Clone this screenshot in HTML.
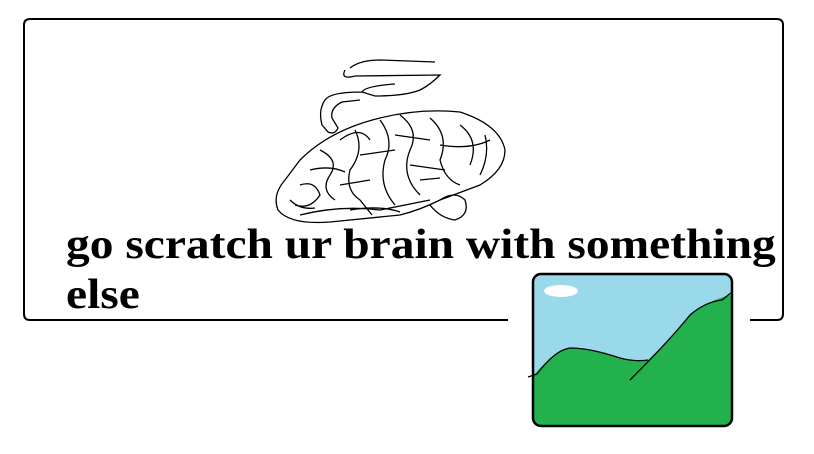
<!DOCTYPE html>
<html><head><style>
body{margin:0;width:814px;height:454px;background:#fff;position:relative;overflow:hidden}
.t{position:absolute;left:66px;top:220px;font:bold 42px/50px "Liberation Serif",serif;color:#000;white-space:nowrap;transform:scaleX(1.13);transform-origin:0 0}
</style></head><body>
<svg width="814" height="454" style="position:absolute;left:0;top:0" fill="none" stroke="#000">
<path d="M508 320 H30 Q24 320 24 314 V25 Q24 19 30 19 H777 Q783 19 783 25 V314 Q783 320 777 320 H750" stroke-width="2"/>
<g stroke-width="1.3">
<path d="M350 68 Q360 60 380 60 L435 62 M345 70 Q340 80 355 76 L440 75 Q430 85 420 90 Q405 96 375 96 L362 92 Q365 86 395 84 M362 92 Q330 92 325 100 Q318 110 322 125 L328 132 Q335 135 338 128 L332 118 Q330 108 342 102 L360 100"/>
<path d="M300 160 Q330 130 380 118 Q420 108 460 112 Q500 125 505 150 Q505 170 480 185 L440 200 Q420 210 400 215 L330 222 Q290 225 278 210 Q272 195 285 180 Z"/>
<path d="M440 200 Q455 190 465 200 Q470 215 455 220 Q440 218 430 205"/>
<path d="M320 150 Q340 160 330 175 Q320 190 335 200 M355 130 Q365 150 350 170 Q345 190 360 200 L372 215 M380 120 Q395 140 385 160 Q378 185 395 205 M400 115 Q420 130 410 150 Q400 175 420 195 M430 118 Q450 135 440 160 Q445 180 460 185 M460 125 Q480 140 470 165 M485 135 Q490 155 480 175 M300 185 Q315 180 320 195 Q310 210 295 205 M340 185 L370 180 M395 135 L430 140 M410 165 L445 170 M350 210 Q380 205 400 212 M290 200 Q300 210 315 208 M370 140 Q360 125 340 140 M420 180 L440 178 M310 170 Q330 165 345 172 M440 145 Q470 150 490 140 M300 215 Q340 205 380 210 L430 200 M360 155 L395 150"/>
</g>
<rect x="533" y="274" width="199" height="152" rx="8" fill="#99d9ea" stroke="none"/>
<path d="M533 376 Q555 350 570 348 Q590 348 620 358 Q635 362 648 360 Q670 340 690 315 Q705 302 730 295 L732 298 V418 Q732 426 724 426 H541 Q533 426 533 418 Z" fill="#22b14c" stroke="none"/>
<path d="M528 377 L537 374 Q555 350 570 348 Q590 348 620 358 Q635 362 648 360 M630 380 Q670 340 690 315 Q705 302 722 300 L732 292" stroke-width="1.3"/>
<ellipse cx="561" cy="291" rx="17" ry="6" fill="#fff" stroke="none"/>
<rect x="533" y="274" width="199" height="152" rx="8" stroke-width="2.5"/>
</svg>
<div class="t">go scratch ur brain with something<br>else</div>
</body></html>
